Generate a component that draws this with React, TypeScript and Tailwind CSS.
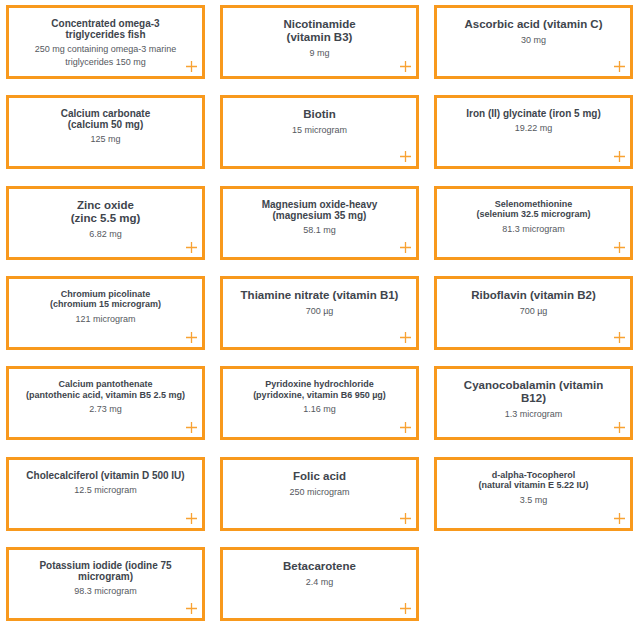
import React from 'react';

type Size = 'lg' | 'md' | 'sm';

interface Ingredient {
  title: string[];
  amount: string[];
  size: Size;
  addable?: boolean;
}

const titleSize: Record<Size, string> = {
  lg: 'text-[11.5px] leading-[13px]',
  md: 'text-[10px] leading-[11px]',
  sm: 'text-[9px] leading-[10.5px]',
};

const ingredients: Ingredient[] = [
  { title: ['Concentrated omega-3', 'triglycerides fish'], amount: ['250 mg containing omega-3 marine', 'triglycerides 150 mg'], size: 'md' },
  { title: ['Nicotinamide', '(vitamin B3)'], amount: ['9 mg'], size: 'lg' },
  { title: ['Ascorbic acid (vitamin C)'], amount: ['30 mg'], size: 'lg' },
  { title: ['Calcium carbonate', '(calcium 50 mg)'], amount: ['125 mg'], size: 'md', addable: false },
  { title: ['Biotin'], amount: ['15 microgram'], size: 'lg' },
  { title: ['Iron (II) glycinate (iron 5 mg)'], amount: ['19.22 mg'], size: 'md' },
  { title: ['Zinc oxide', '(zinc 5.5 mg)'], amount: ['6.82 mg'], size: 'lg' },
  { title: ['Magnesium oxide-heavy', '(magnesium 35 mg)'], amount: ['58.1 mg'], size: 'md' },
  { title: ['Selenomethionine', '(selenium 32.5 microgram)'], amount: ['81.3 microgram'], size: 'sm' },
  { title: ['Chromium picolinate', '(chromium 15 microgram)'], amount: ['121 microgram'], size: 'sm' },
  { title: ['Thiamine nitrate (vitamin B1)'], amount: ['700 µg'], size: 'lg' },
  { title: ['Riboflavin (vitamin B2)'], amount: ['700 µg'], size: 'lg' },
  { title: ['Calcium pantothenate', '(pantothenic acid, vitamin B5 2.5 mg)'], amount: ['2.73 mg'], size: 'sm' },
  { title: ['Pyridoxine hydrochloride', '(pyridoxine, vitamin B6 950 µg)'], amount: ['1.16 mg'], size: 'sm' },
  { title: ['Cyanocobalamin (vitamin', 'B12)'], amount: ['1.3 microgram'], size: 'lg' },
  { title: ['Cholecalciferol (vitamin D 500 IU)'], amount: ['12.5 microgram'], size: 'md' },
  { title: ['Folic acid'], amount: ['250 microgram'], size: 'lg' },
  { title: ['d-alpha-Tocopherol', '(natural vitamin E 5.22 IU)'], amount: ['3.5 mg'], size: 'sm' },
  { title: ['Potassium iodide (iodine 75', 'microgram)'], amount: ['98.3 microgram'], size: 'md' },
  { title: ['Betacarotene'], amount: ['2.4 mg'], size: 'lg' },
];

const PlusIcon = () => (
  <svg width="11" height="11" viewBox="0 0 11 11" className="absolute right-[5px] bottom-[4px]">
    <path d="M5.5 0v11M0 5.5h11" stroke="#f8a233" strokeWidth="1.3" fill="none" />
  </svg>
);

const IngredientCard = ({ item }: { item: Ingredient }) => (
  <div className="relative h-[74px] border-[3px] border-[#f8991d] bg-white px-[12px] pt-[10px] text-center">
    <div className={`font-bold text-[#40454d] ${titleSize[item.size]}`}>
      {item.title.map((line) => (
        <div key={line} className="whitespace-nowrap">{line}</div>
      ))}
    </div>
    <div className="mt-[3px] text-[9px] leading-[13px] text-[#55585e]">
      {item.amount.map((line) => (
        <div key={line} className="whitespace-nowrap">{line}</div>
      ))}
    </div>
    {item.addable !== false && <PlusIcon />}
  </div>
);

export default function App() {
  return (
    <div
      className="min-h-[627px] w-[640px] bg-white pl-[6px] pt-[5px]"
      style={{ fontFamily: '"Liberation Sans", Arial, sans-serif' }}
    >
      <div className="grid grid-cols-[199px_199px_199px] gap-x-[15px] gap-y-[16.33px]">
        {ingredients.map((item, i) => (
          <IngredientCard key={i} item={item} />
        ))}
      </div>
    </div>
  );
}
